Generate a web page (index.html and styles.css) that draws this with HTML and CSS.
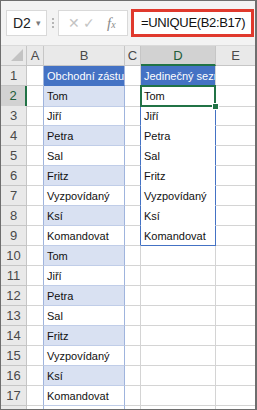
FILE: index.html
```html
<!DOCTYPE html>
<html lang="cs">
<head>
    <meta charset="UTF-8">
    <title>UNIQUE</title>
    <link rel="stylesheet" href="styles.css">
</head>
<body>
    <div class="sheet">

        <!-- formula bar -->
        <div class="formula-bar">
            <div class="name-box">D2 <span class="arrow">&#9662;</span></div>
            <div class="dots"><span></span><span></span><span></span></div>
            <div class="fx-box">
                <span class="fx-x">&#10005;</span>
                <span class="fx-ok">&#10003;</span>
                <span class="fx">f<small>x</small></span>
            </div>
            <div class="formula">=UNIQUE(B2:B17)</div>
        </div>

        <!-- column headers -->
        <div class="row head">
            <div class="rh corner"><span class="tri"></span></div>
            <div class="ch">A</div>
            <div class="ch col-b">B</div>
            <div class="ch">C</div>
            <div class="ch sel">D</div>
            <div class="ch last">E</div>
        </div>

        <div class="row">
            <div class="rh">1</div><div class="c a"></div>
            <div class="c b th">Obchodní zástupce</div><div class="c cc"></div>
            <div class="c d th">Jedinečný seznam</div><div class="c last"></div>
        </div>
        <div class="row">
            <div class="rh cur">2</div><div class="c a"></div>
            <div class="c b band">Tom</div><div class="c cc sp"></div>
            <div class="c d sp active">Tom</div><div class="c last"></div>
        </div>
        <div class="row">
            <div class="rh">3</div><div class="c a"></div>
            <div class="c b">Jiří</div><div class="c cc sp"></div>
            <div class="c d sp">Jiří</div><div class="c last"></div>
        </div>
        <div class="row">
            <div class="rh">4</div><div class="c a"></div>
            <div class="c b band">Petra</div><div class="c cc sp"></div>
            <div class="c d sp">Petra</div><div class="c last"></div>
        </div>
        <div class="row">
            <div class="rh">5</div><div class="c a"></div>
            <div class="c b">Sal</div><div class="c cc sp"></div>
            <div class="c d sp">Sal</div><div class="c last"></div>
        </div>
        <div class="row">
            <div class="rh">6</div><div class="c a"></div>
            <div class="c b band">Fritz</div><div class="c cc sp"></div>
            <div class="c d sp">Fritz</div><div class="c last"></div>
        </div>
        <div class="row">
            <div class="rh">7</div><div class="c a"></div>
            <div class="c b">Vyzpovídaný</div><div class="c cc sp"></div>
            <div class="c d sp">Vyzpovídaný</div><div class="c last"></div>
        </div>
        <div class="row">
            <div class="rh">8</div><div class="c a"></div>
            <div class="c b band">Ksí</div><div class="c cc sp"></div>
            <div class="c d sp">Ksí</div><div class="c last"></div>
        </div>
        <div class="row">
            <div class="rh">9</div><div class="c a"></div>
            <div class="c b">Komandovat</div><div class="c cc sp"></div>
            <div class="c d sp sp-end">Komandovat</div><div class="c last"></div>
        </div>
        <div class="row">
            <div class="rh">10</div><div class="c a"></div>
            <div class="c b band">Tom</div><div class="c cc"></div>
            <div class="c d"></div><div class="c last"></div>
        </div>
        <div class="row">
            <div class="rh">11</div><div class="c a"></div>
            <div class="c b">Jiří</div><div class="c cc"></div>
            <div class="c d"></div><div class="c last"></div>
        </div>
        <div class="row">
            <div class="rh">12</div><div class="c a"></div>
            <div class="c b band">Petra</div><div class="c cc"></div>
            <div class="c d"></div><div class="c last"></div>
        </div>
        <div class="row">
            <div class="rh">13</div><div class="c a"></div>
            <div class="c b">Sal</div><div class="c cc"></div>
            <div class="c d"></div><div class="c last"></div>
        </div>
        <div class="row">
            <div class="rh">14</div><div class="c a"></div>
            <div class="c b band">Fritz</div><div class="c cc"></div>
            <div class="c d"></div><div class="c last"></div>
        </div>
        <div class="row">
            <div class="rh">15</div><div class="c a"></div>
            <div class="c b">Vyzpovídaný</div><div class="c cc"></div>
            <div class="c d"></div><div class="c last"></div>
        </div>
        <div class="row">
            <div class="rh">16</div><div class="c a"></div>
            <div class="c b band">Ksí</div><div class="c cc"></div>
            <div class="c d"></div><div class="c last"></div>
        </div>
        <div class="row">
            <div class="rh">17</div><div class="c a"></div>
            <div class="c b">Komandovat</div><div class="c cc"></div>
            <div class="c d"></div><div class="c last"></div>
        </div>
        <div class="row">
            <div class="rh"></div><div class="c a"></div>
            <div class="c b"></div><div class="c cc"></div>
            <div class="c d"></div><div class="c last"></div>
        </div>
    </div>
</body>
</html>
```

FILE: styles.css
```css
:root {
    --grid: #d4d4d4;
    --head-bg: #e9e9e9;
    --head-line: #c6c6c6;
    --blue: #4472c4;
    --band: #d9e1f2;
    --table-line: #9fb4dd;
    --green: #217346;
}

body {
    margin: 0;
    font-family: 'Liberation Sans', Arial, sans-serif;
    background: #fff;
}

.sheet {
    width: 257px;
    height: 410px;
    box-sizing: border-box;
    border: 1px solid #6e6e6e;
    border-right-width: 2px;
    overflow: hidden;
    background: #fff;
}

/* ---- formula bar ---- */

.formula-bar {
    height: 45px;
    box-sizing: border-box;
    background: #f3f3f3;
    border-bottom: 1px solid #dadada;
    display: flex;
    align-items: center;
    padding: 0 0 0 5px;
}

.name-box {
    width: 41px;
    height: 26px;
    box-sizing: border-box;
    background: #fff;
    border: 1px solid #d9d9d9;
    font-size: 14px;
    line-height: 24px;
    padding-left: 6px;
    color: #222;
}

.name-box .arrow {
    font-size: 9px;
    color: #7a7a7a;
    vertical-align: 2px;
    margin-left: 1px;
}

.dots {
    width: 11px;
    display: flex;
    flex-direction: column;
    align-items: center;
    gap: 2px;
}

.dots span {
    width: 2px;
    height: 2px;
    background: #b5b5b5;
}

.fx-box {
    width: 70px;
    height: 26px;
    box-sizing: border-box;
    background: #fff;
    border: 1px solid #d9d9d9;
    display: flex;
    align-items: center;
    padding-left: 9px;
    gap: 3px;
    color: #c4c4c4;
    font-size: 14px;
}

.fx-box .fx {
    margin-left: 9px;
    font-family: 'Liberation Serif', serif;
    font-style: italic;
    font-size: 15px;
    color: #8a8a8a;
}

.fx-box .fx small {
    font-size: 10px;
}

.formula {
    margin-left: 3px;
    width: 123px;
    height: 28px;
    box-sizing: border-box;
    border: 3px solid #e0392d;
    background: #fff;
    font-size: 13px;
    letter-spacing: -0.35px;
    line-height: 22px;
    padding-left: 7px;
    color: #111;
    white-space: nowrap;
}

/* ---- grid ---- */

.row {
    display: grid;
    grid-template-columns: 26px 17px 81px 16px 75px 1fr;
    height: 20px;
}

.row > div {
    box-sizing: border-box;
    border-right: 1px solid var(--grid);
    border-bottom: 1px solid var(--grid);
    font-size: 11px;
    line-height: 20px;
    white-space: nowrap;
    overflow: hidden;
}

.rh,
.ch {
    background: var(--head-bg);
    color: #4a4a4a;
    text-align: center;
    font-size: 13px !important;
}

.row > .rh,
.row > .ch {
    border-color: var(--head-line);
}

.corner {
    position: relative;
}

.tri {
    position: absolute;
    right: 3px;
    bottom: 4px;
    width: 0;
    height: 0;
    border-left: 12px solid transparent;
    border-bottom: 12px solid #c3c3c3;
}

.ch.sel {
    background: #d2d2d2;
    color: #215d3a;
    border-bottom: 2px solid var(--green);
}

.rh.cur {
    background: #d2d2d2;
    color: #215d3a;
    border-right: 2px solid var(--green);
}

.row > .last {
    border-right: none;
}

.c {
    padding-left: 3px;
    color: #111;
}

.row > .a {
    border-right-color: var(--table-line);
}

.row > .b {
    border-right-color: var(--table-line);
    border-bottom-color: #c0cde8;
}

.band {
    background: var(--band);
}

.th {
    background: var(--blue);
    color: #fff;
}

.row > .th {
    border-bottom-color: var(--blue);
}

/* spill range D2:D9 */
.row > .cc.sp,
.row > .d.sp {
    border-right-color: var(--blue);
}

.row > .d.sp {
    border-bottom-color: #fff;
}

.row > .d.sp-end {
    border-bottom-color: var(--blue);
}

.active {
    position: relative;
    overflow: visible !important;
}

.active::after {
    content: '';
    position: absolute;
    left: -1px;
    top: -1px;
    right: -1px;
    bottom: -1px;
    border: 2px solid var(--green);
}

.active::before {
    content: '';
    position: absolute;
    right: -4px;
    bottom: -4px;
    width: 5px;
    height: 5px;
    background: var(--green);
    border: 1px solid #fff;
    z-index: 1;
}
```
